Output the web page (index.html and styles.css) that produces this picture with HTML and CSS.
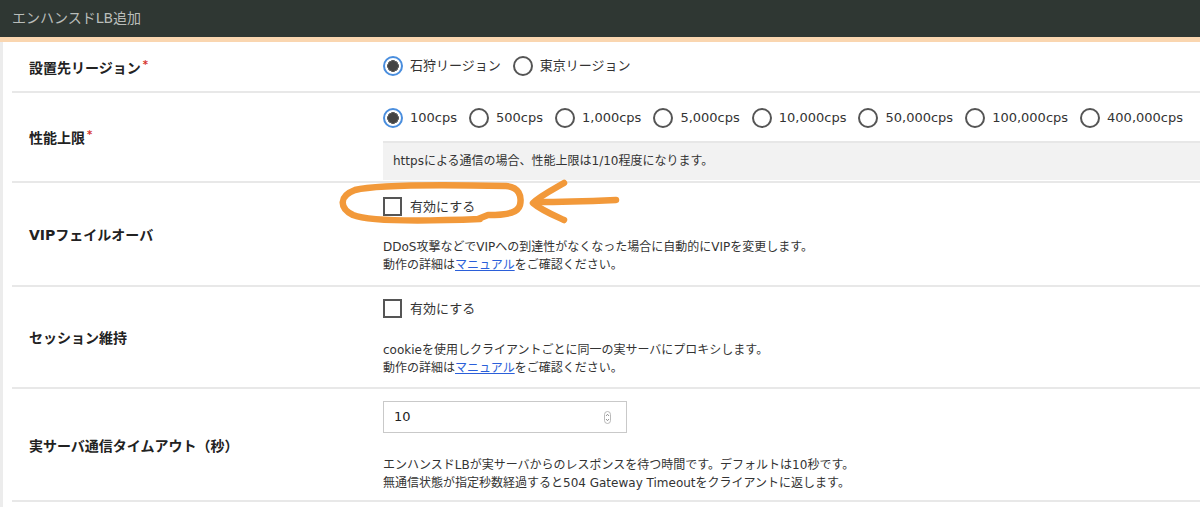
FILE: index.html
```html
<!DOCTYPE html>
<html lang="ja">
<head>
<meta charset="utf-8">
<title>エンハンスドLB追加</title>
<link rel="stylesheet" href="styles.css">
</head>
<body>
<header class="titlebar">エンハンスドLB追加</header>
<div class="accent"></div>
<main class="form">
  <div class="row row-region">
    <div class="label">設置先リージョン<span class="req">*</span></div>
    <div class="value">
      <div class="options">
        <label class="opt"><span class="radio checked"></span>石狩リージョン</label>
        <label class="opt"><span class="radio"></span>東京リージョン</label>
      </div>
    </div>
  </div>
  <div class="row row-perf">
    <div class="label">性能上限<span class="req">*</span></div>
    <div class="value">
      <div class="options">
        <label class="opt"><span class="radio checked"></span>100cps</label>
        <label class="opt"><span class="radio"></span>500cps</label>
        <label class="opt"><span class="radio"></span>1,000cps</label>
        <label class="opt"><span class="radio"></span>5,000cps</label>
        <label class="opt"><span class="radio"></span>10,000cps</label>
        <label class="opt"><span class="radio"></span>50,000cps</label>
        <label class="opt"><span class="radio"></span>100,000cps</label>
        <label class="opt"><span class="radio"></span>400,000cps</label>
      </div>
      <div class="info">httpsによる通信の場合、性能上限は1/10程度になります。</div>
    </div>
  </div>
  <div class="row row-vip">
    <div class="label">VIPフェイルオーバ</div>
    <div class="value">
      <label class="opt check-opt"><span class="checkbox"></span>有効にする</label>
      <p class="desc">DDoS攻撃などでVIPへの到達性がなくなった場合に自動的にVIPを変更します。<br>動作の詳細は<a href="#" class="link">マニュアル</a>をご確認ください。</p>
    </div>
  </div>
  <div class="row row-session">
    <div class="label">セッション維持</div>
    <div class="value">
      <label class="opt check-opt"><span class="checkbox"></span>有効にする</label>
      <p class="desc">cookieを使用しクライアントごとに同一の実サーバにプロキシします。<br>動作の詳細は<a href="#" class="link">マニュアル</a>をご確認ください。</p>
    </div>
  </div>
  <div class="row row-timeout">
    <div class="label">実サーバ通信タイムアウト（秒）</div>
    <div class="value">
      <div class="number-input">
        <span class="num">10</span>
        <svg class="spinner" width="7" height="13" viewBox="0 0 7 13">
          <rect x="0.5" y="0.5" width="6" height="12" rx="3" fill="#fff" stroke="#a8a8a8" stroke-width="0.8"/>
          <path d="M2 5 L3.5 3.3 L5 5" fill="none" stroke="#777" stroke-width="0.8"/>
          <path d="M2 8 L3.5 9.7 L5 8" fill="none" stroke="#777" stroke-width="0.8"/>
        </svg>
      </div>
      <p class="desc">エンハンスドLBが実サーバからのレスポンスを待つ時間です。デフォルトは10秒です。<br>無通信状態が指定秒数経過すると504 Gateway Timeoutをクライアントに返します。</p>
    </div>
  </div>
  <div class="row row-tail"></div>
</main>
<svg class="annotation" width="1200" height="507" viewBox="0 0 1200 507">
  <g fill="none" stroke="#f2993a" stroke-width="6.5" stroke-linecap="round" stroke-linejoin="round">
    <path d="M480 219 C430 221 370 222 353 215 C339 208 339 196 355 190 C378 184 460 185 506 186 C519 187 522 196 520 205 C518 212 510 215 488 215 L478 219"/>
    <path d="M564 183 C552 190 540 196 533 203 C541 210 553 215 564 220"/>
    <path d="M536 202 C562 202 592 201 616 200"/>
  </g>
</svg>
</body>
</html>
```
FILE: styles.css
```css
html, body {
  margin: 0;
  padding: 0;
  background: #fff;
}

body {
  font-family: "DejaVu Sans", "Noto Sans CJK JP", sans-serif;
  color: #222;
  width: 1200px;
  height: 507px;
  overflow: hidden;
  position: relative;
}

.titlebar {
  height: 37px;
  box-sizing: border-box;
  background: #2f3733;
  color: #b9bdba;
  font-size: 14px;
  line-height: 37px;
  padding-left: 12px;
}

.accent {
  height: 5px;
  background: #fad6b0;
}

.form {
  border-left: 3px solid #ececec;
  padding-left: 9px;
  min-height: 470px;
}

.row {
  display: grid;
  grid-template-columns: 371px 1fr;
  align-items: center;
  border-bottom: 2px solid #e8e8e8;
}

.label {
  padding-left: 17px;
  font-size: 14px;
  font-weight: bold;
  color: #222;
}

.req {
  color: #d6342c;
  font-size: 10px;
  vertical-align: 5px;
  margin-left: 2px;
}

.value {
  font-size: 13px;
  line-height: 20px;
  color: #333;
}

.options {
  display: flex;
  flex-wrap: nowrap;
  gap: 12px;
}

.opt {
  display: flex;
  align-items: center;
  gap: 7px;
  font-size: 13px;
  line-height: 20px;
  color: #333;
  white-space: nowrap;
}

.radio {
  width: 20px;
  height: 20px;
  box-sizing: border-box;
  border-radius: 50%;
  border: 2px solid #555;
  background: #fff;
  flex: none;
}

.radio.checked {
  border: 2.5px solid #4a8ede;
  background: radial-gradient(circle, #444 0 4.6px, #5a5a5a 4.8px 5.6px, #fff 6px);
}

.checkbox {
  width: 19px;
  height: 19px;
  box-sizing: border-box;
  border: 2px solid #555;
  background: #fff;
  flex: none;
}

.check-opt {
  gap: 8px;
  height: 19px;
  width: fit-content;
}

.row-region .value {
  padding: 14px 0 15px;
}

.row-perf .value {
  padding: 15px 0 1px;
}

.info {
  margin-top: 13px;
  height: 39px;
  box-sizing: border-box;
  background: #f2f2f2;
  border-top: 2px solid #e7e7e7;
  padding-left: 10px;
  font-size: 12px;
  line-height: 37px;
  color: #333;
}

.desc {
  margin: 22px 0 0;
  font-size: 12px;
  line-height: 18px;
  color: #333;
}

.link {
  color: #2b5fd9;
  text-decoration: underline;
}

.row-vip .value {
  padding: 14px 0 11px;
}

.row-session .value {
  padding: 12px 0 10px;
}

.row-session .desc {
  margin-top: 23px;
}

.row-timeout .value {
  padding: 12px 0 8px;
}

.row-timeout .desc {
  margin-top: 23px;
}

.number-input {
  width: 244px;
  height: 32px;
  box-sizing: border-box;
  border: 1px solid #c9c9c9;
  display: flex;
  align-items: center;
  justify-content: space-between;
  padding: 0 15px 0 10px;
  background: #fff;
}

.num {
  font-size: 13px;
  color: #222;
}

.spinner {
  display: block;
}

.row-tail {
  border-bottom: none;
  height: 10px;
}

.annotation {
  position: absolute;
  top: 0;
  left: 0;
  pointer-events: none;
}
```
